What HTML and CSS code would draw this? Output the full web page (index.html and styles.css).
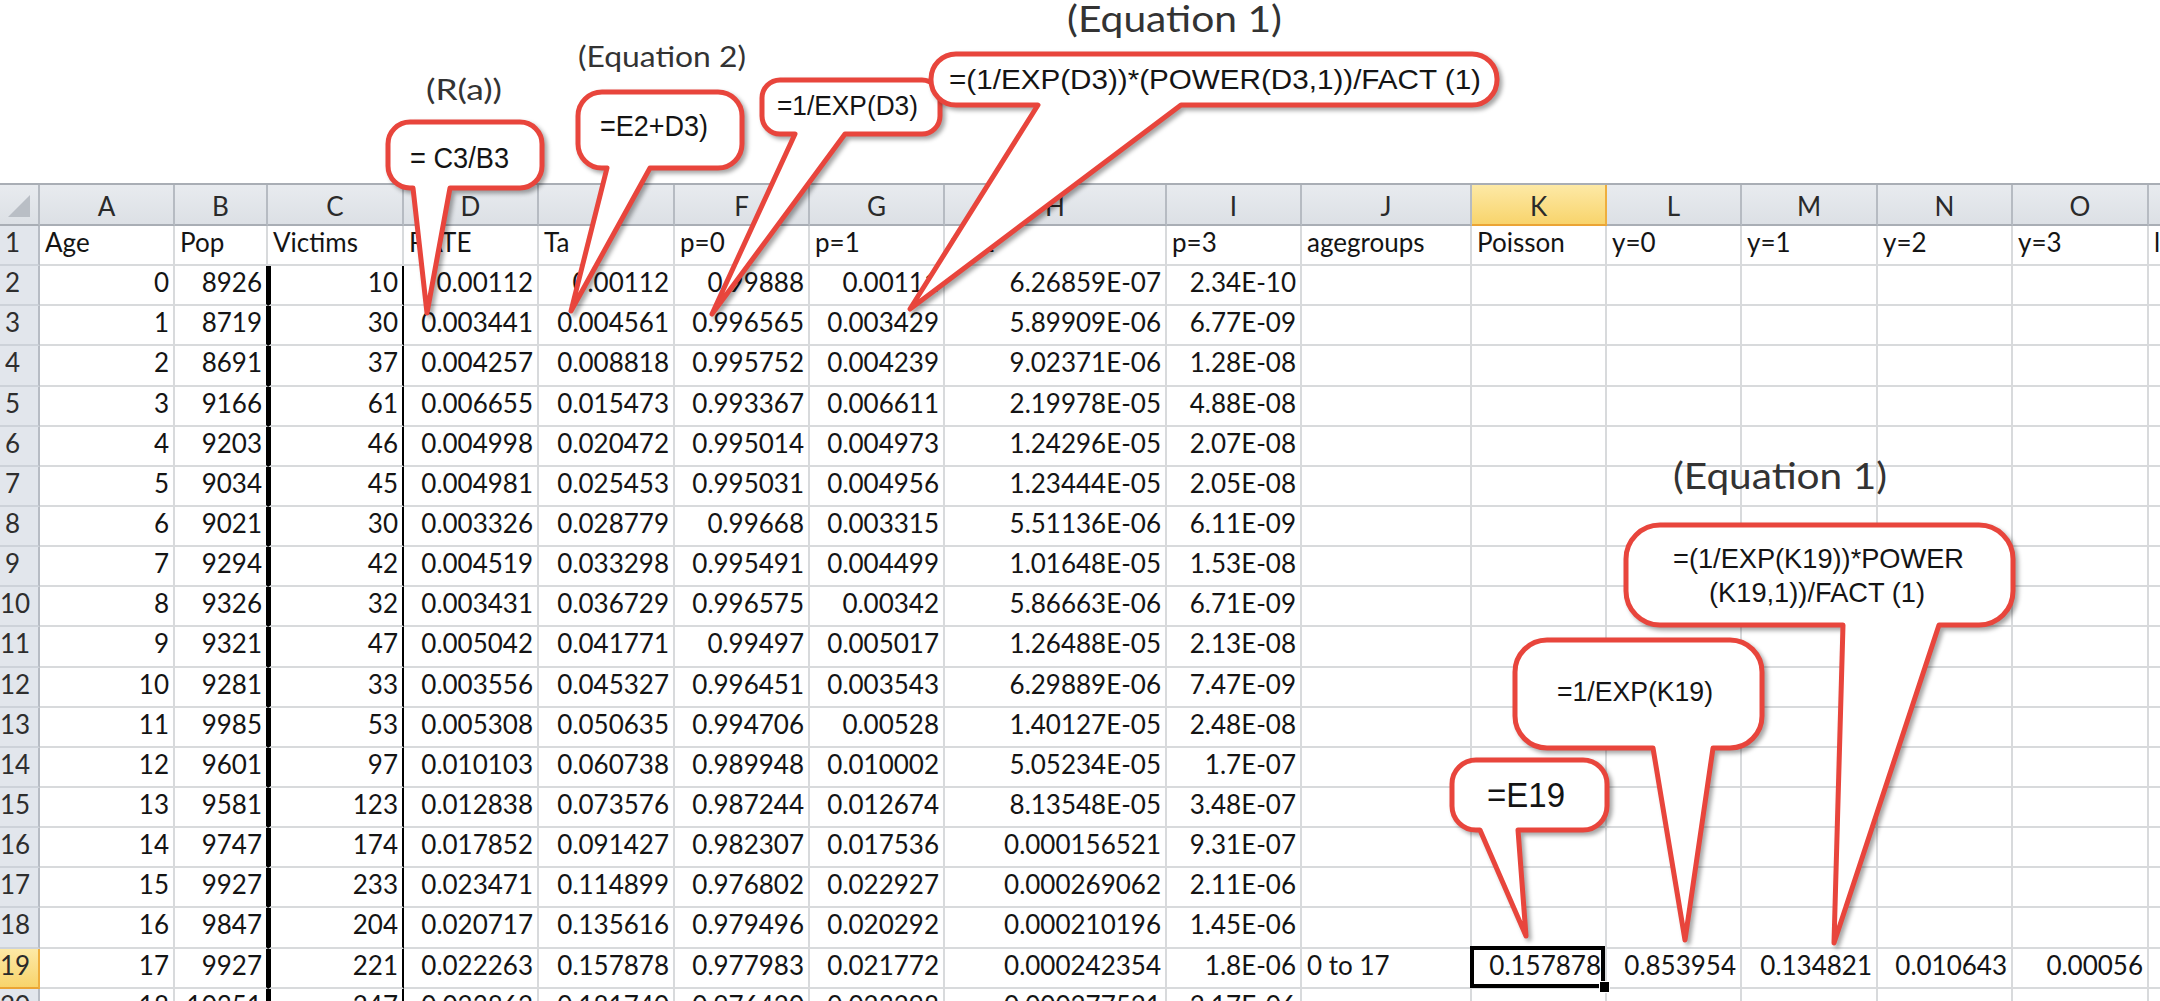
FILE: index.html
```html
<!DOCTYPE html>
<html>
<head>
<meta charset="utf-8">
<link rel="stylesheet" href="styles.css">
</head>
<body>
<div class="page">
  <div class="top"></div>
  <div class="sheet">
    <div class="row head"><div class="corner"></div><div>A</div><div>B</div><div>C</div><div>D</div><div>E</div><div>F</div><div>G</div><div>H</div><div>I</div><div>J</div><div class="hsel">K</div><div>L</div><div>M</div><div>N</div><div>O</div><div>P</div></div>
    <div class="row"><div class="rh">1</div><div class="l">Age</div><div class="l">Pop</div><div class="l">Victims</div><div class="l">RATE</div><div class="l">Ta</div><div class="l">p=0</div><div class="l">p=1</div><div class="l">p=2</div><div class="l">p=3</div><div class="l">agegroups</div><div class="l">Poisson</div><div class="l">y=0</div><div class="l">y=1</div><div class="l">y=2</div><div class="l">y=3</div><div class="l">lambda</div></div>
    <div class="row d"><div class="rh">2</div><div>0</div><div>8926</div><div>10</div><div>0.00112</div><div>0.00112</div><div>0.99888</div><div>0.00111</div><div>6.26859E-07</div><div>2.34E-10</div><div></div><div></div><div></div><div></div><div></div><div></div><div></div></div>
    <div class="row d"><div class="rh">3</div><div>1</div><div>8719</div><div>30</div><div>0.003441</div><div>0.004561</div><div>0.996565</div><div>0.003429</div><div>5.89909E-06</div><div>6.77E-09</div><div></div><div></div><div></div><div></div><div></div><div></div><div></div></div>
    <div class="row d"><div class="rh">4</div><div>2</div><div>8691</div><div>37</div><div>0.004257</div><div>0.008818</div><div>0.995752</div><div>0.004239</div><div>9.02371E-06</div><div>1.28E-08</div><div></div><div></div><div></div><div></div><div></div><div></div><div></div></div>
    <div class="row d"><div class="rh">5</div><div>3</div><div>9166</div><div>61</div><div>0.006655</div><div>0.015473</div><div>0.993367</div><div>0.006611</div><div>2.19978E-05</div><div>4.88E-08</div><div></div><div></div><div></div><div></div><div></div><div></div><div></div></div>
    <div class="row d"><div class="rh">6</div><div>4</div><div>9203</div><div>46</div><div>0.004998</div><div>0.020472</div><div>0.995014</div><div>0.004973</div><div>1.24296E-05</div><div>2.07E-08</div><div></div><div></div><div></div><div></div><div></div><div></div><div></div></div>
    <div class="row d"><div class="rh">7</div><div>5</div><div>9034</div><div>45</div><div>0.004981</div><div>0.025453</div><div>0.995031</div><div>0.004956</div><div>1.23444E-05</div><div>2.05E-08</div><div></div><div></div><div></div><div></div><div></div><div></div><div></div></div>
    <div class="row d"><div class="rh">8</div><div>6</div><div>9021</div><div>30</div><div>0.003326</div><div>0.028779</div><div>0.99668</div><div>0.003315</div><div>5.51136E-06</div><div>6.11E-09</div><div></div><div></div><div></div><div></div><div></div><div></div><div></div></div>
    <div class="row d"><div class="rh">9</div><div>7</div><div>9294</div><div>42</div><div>0.004519</div><div>0.033298</div><div>0.995491</div><div>0.004499</div><div>1.01648E-05</div><div>1.53E-08</div><div></div><div></div><div></div><div></div><div></div><div></div><div></div></div>
    <div class="row d"><div class="rh">10</div><div>8</div><div>9326</div><div>32</div><div>0.003431</div><div>0.036729</div><div>0.996575</div><div>0.00342</div><div>5.86663E-06</div><div>6.71E-09</div><div></div><div></div><div></div><div></div><div></div><div></div><div></div></div>
    <div class="row d"><div class="rh">11</div><div>9</div><div>9321</div><div>47</div><div>0.005042</div><div>0.041771</div><div>0.99497</div><div>0.005017</div><div>1.26488E-05</div><div>2.13E-08</div><div></div><div></div><div></div><div></div><div></div><div></div><div></div></div>
    <div class="row d"><div class="rh">12</div><div>10</div><div>9281</div><div>33</div><div>0.003556</div><div>0.045327</div><div>0.996451</div><div>0.003543</div><div>6.29889E-06</div><div>7.47E-09</div><div></div><div></div><div></div><div></div><div></div><div></div><div></div></div>
    <div class="row d"><div class="rh">13</div><div>11</div><div>9985</div><div>53</div><div>0.005308</div><div>0.050635</div><div>0.994706</div><div>0.00528</div><div>1.40127E-05</div><div>2.48E-08</div><div></div><div></div><div></div><div></div><div></div><div></div><div></div></div>
    <div class="row d"><div class="rh">14</div><div>12</div><div>9601</div><div>97</div><div>0.010103</div><div>0.060738</div><div>0.989948</div><div>0.010002</div><div>5.05234E-05</div><div>1.7E-07</div><div></div><div></div><div></div><div></div><div></div><div></div><div></div></div>
    <div class="row d"><div class="rh">15</div><div>13</div><div>9581</div><div>123</div><div>0.012838</div><div>0.073576</div><div>0.987244</div><div>0.012674</div><div>8.13548E-05</div><div>3.48E-07</div><div></div><div></div><div></div><div></div><div></div><div></div><div></div></div>
    <div class="row d"><div class="rh">16</div><div>14</div><div>9747</div><div>174</div><div>0.017852</div><div>0.091427</div><div>0.982307</div><div>0.017536</div><div>0.000156521</div><div>9.31E-07</div><div></div><div></div><div></div><div></div><div></div><div></div><div></div></div>
    <div class="row d"><div class="rh">17</div><div>15</div><div>9927</div><div>233</div><div>0.023471</div><div>0.114899</div><div>0.976802</div><div>0.022927</div><div>0.000269062</div><div>2.11E-06</div><div></div><div></div><div></div><div></div><div></div><div></div><div></div></div>
    <div class="row d"><div class="rh">18</div><div>16</div><div>9847</div><div>204</div><div>0.020717</div><div>0.135616</div><div>0.979496</div><div>0.020292</div><div>0.000210196</div><div>1.45E-06</div><div></div><div></div><div></div><div></div><div></div><div></div><div></div></div>
    <div class="row d"><div class="rh hsel">19</div><div>17</div><div>9927</div><div>221</div><div>0.022263</div><div>0.157878</div><div>0.977983</div><div>0.021772</div><div>0.000242354</div><div>1.8E-06</div><div class="l">0 to 17</div><div class="cur">0.157878</div><div>0.853954</div><div>0.134821</div><div>0.010643</div><div>0.00056</div><div></div></div>
    <div class="row d"><div class="rh">20</div><div>18</div><div>10351</div><div>247</div><div>0.023862</div><div>0.181740</div><div>0.976420</div><div>0.023298</div><div>0.000277521</div><div>2.17E-06</div><div></div><div></div><div></div><div></div><div></div><div></div><div></div></div>
  </div>

  <svg class="overlay" width="2160" height="1001" viewBox="0 0 2160 1001">
    <text class="lbl s36" x="1067" y="32" textLength="215" lengthAdjust="spacingAndGlyphs">(Equation 1)</text>
    <text class="lbl s29" x="578" y="67" textLength="168" lengthAdjust="spacingAndGlyphs">(Equation 2)</text>
    <text class="lbl s29" x="426" y="100" textLength="76" lengthAdjust="spacingAndGlyphs">(R(a))</text>

    <path class="co" d="M 410 122 H 520 A 22 22 0 0 1 542 144 V 166 A 22 22 0 0 1 520 188 H 450 L 427 313 L 413 188 H 410 A 22 22 0 0 1 388 166 V 144 A 22 22 0 0 1 410 122 Z"/>
    <text class="ct s30" x="410" y="168" textLength="99" lengthAdjust="spacingAndGlyphs">= C3/B3</text>

    <path class="co" d="M 602 92 H 718 A 24 24 0 0 1 742 116 V 144 A 24 24 0 0 1 718 168 H 650 L 571 311 L 607 168 H 602 A 24 24 0 0 1 578 144 V 116 A 24 24 0 0 1 602 92 Z"/>
    <text class="ct s30" x="600" y="136" textLength="108" lengthAdjust="spacingAndGlyphs">=E2+D3)</text>

    <path class="co" d="M 780 80 H 922 A 18 18 0 0 1 940 98 V 116 A 18 18 0 0 1 922 134 H 845 L 712 314 L 795 134 H 780 A 18 18 0 0 1 762 116 V 98 A 18 18 0 0 1 780 80 Z"/>
    <text class="ct s28" x="777" y="115" textLength="141" lengthAdjust="spacingAndGlyphs">=1/EXP(D3)</text>

    <path class="co" d="M 956 54 H 1472 A 25 25 0 0 1 1497 79 V 80 A 25 25 0 0 1 1472 105 H 1181 L 910 309 L 1038 105 H 956 A 25 25 0 0 1 931 80 V 79 A 25 25 0 0 1 956 54 Z"/>
    <text class="ct s28" x="949" y="89" textLength="532" lengthAdjust="spacingAndGlyphs">=(1/EXP(D3))*(POWER(D3,1))/FACT (1)</text>

    <text class="lbl s36" x="1673" y="489" textLength="214" lengthAdjust="spacingAndGlyphs">(Equation 1)</text>

    <path class="co" d="M 1660 525 H 1979 A 34 34 0 0 1 2013 559 V 591 A 34 34 0 0 1 1979 625 H 1939 L 1834 943 L 1843 625 H 1660 A 34 34 0 0 1 1626 591 V 559 A 34 34 0 0 1 1660 525 Z"/>
    <text class="ct s28" x="1673" y="568" textLength="291" lengthAdjust="spacingAndGlyphs">=(1/EXP(K19))*POWER</text>
    <text class="ct s28" x="1709" y="602" textLength="216" lengthAdjust="spacingAndGlyphs">(K19,1))/FACT (1)</text>

    <path class="co" d="M 1547 640 H 1730 A 32 32 0 0 1 1762 672 V 716 A 32 32 0 0 1 1730 748 H 1713 L 1685 940 L 1653 748 H 1547 A 32 32 0 0 1 1515 716 V 672 A 32 32 0 0 1 1547 640 Z"/>
    <text class="ct s28" x="1557" y="701" textLength="156" lengthAdjust="spacingAndGlyphs">=1/EXP(K19)</text>

    <path class="co" d="M 1476 760 H 1583 A 24 24 0 0 1 1607 784 V 806 A 24 24 0 0 1 1583 830 H 1518 L 1526 936 L 1480 830 H 1476 A 24 24 0 0 1 1452 806 V 784 A 24 24 0 0 1 1476 760 Z"/>
    <text class="ct s35" x="1487" y="807" textLength="78" lengthAdjust="spacingAndGlyphs">=E19</text>
  </svg>
</div>
</body>
</html>
```

FILE: styles.css
```css
html, body {
  margin: 0;
  padding: 0;
  background: #ffffff;
}

.page {
  position: relative;
  width: 2160px;
  height: 1001px;
  overflow: hidden;
  background: #ffffff;
  font-family: Lato, "Liberation Sans", sans-serif;
}

.top {
  height: 183px;
}

.row {
  display: grid;
  grid-template-columns: 40px 135px 93px 136px 135px 136px 135px 135px 222px 135px 170px 135px 135px 136px 135px 136px 40px;
  height: 40.15px;
  box-sizing: border-box;
}

.row > div {
  box-sizing: border-box;
  border-right: 2px solid #d8dadc;
  border-bottom: 2px solid #d8dadc;
  padding: 0 4px 0 5px;
  font-size: 26px;
  line-height: 32px;
  text-align: right;
  white-space: nowrap;
  overflow: hidden;
  color: #141414;
}

.row > .l {
  text-align: left;
}

.row > .rh {
  background: #e2e6ec;
  border-right-color: #b7bcc4;
  border-bottom-color: #cdd2d9;
  text-align: center;
  padding: 0 13px 0 0;
  color: #2e2e2e;
}

.head {
  height: 43px;
  border-top: 2px solid #a9aeb5;
}

.head > div {
  background: linear-gradient(#e8ebef, #dce0e5);
  text-align: center;
  padding: 3px 0 0 0;
  line-height: 37px;
  border-right-color: #b6bbc2;
  border-bottom-color: #a9aeb5;
  color: #2a2a2a;
}

.head > .corner {
  position: relative;
  background: linear-gradient(#e8ebef, #dce0e5);
}

.corner::after {
  content: "";
  position: absolute;
  right: 8px;
  bottom: 7px;
  width: 0;
  height: 0;
  border-left: 22px solid transparent;
  border-bottom: 22px solid #b9bec5;
}

.row > .hsel,
.head > .hsel {
  background: linear-gradient(#fde9a6, #f8d46c);
  border-right-color: #eeae3e;
  border-bottom-color: #eba434;
  color: #2a2a2a;
}

.d > div:nth-child(3) {
  border-right: 2px solid #000000;
}

.d > div:nth-child(4) {
  border-left: 3px solid #000000;
  border-right-color: #000000;
}

.row > .cur {
  position: relative;
  overflow: visible;
}

.cur::after {
  content: "";
  position: absolute;
  left: -2px;
  top: -3px;
  right: 0;
  bottom: -1px;
  border: 4px solid #000000;
}

.cur::before {
  content: "";
  position: absolute;
  right: -5px;
  bottom: -6px;
  width: 9px;
  height: 10px;
  background: #000000;
  border: 1px solid #ffffff;
  z-index: 2;
}

.overlay {
  position: absolute;
  left: 0;
  top: 0;
  pointer-events: none;
}

.co {
  fill: #ffffff;
  stroke: #e8453c;
  stroke-width: 5;
  stroke-linejoin: round;
  filter: drop-shadow(3px 3px 2px rgba(0, 0, 0, 0.35));
}

.ct {
  font-family: "Liberation Sans Narrow", "Liberation Sans", Arial, sans-serif;
  font-size: 28px;
  fill: #141414;
}

.ct.s28 {
  font-size: 28px;
}

.ct.s30 {
  font-size: 30px;
}

.ct.s35 {
  font-size: 35px;
}

.lbl {
  font-family: Lato, "Liberation Sans", sans-serif;
  font-weight: 400;
  fill: #333333;
}

.lbl.s29 {
  font-size: 29px;
}

.lbl.s36 {
  font-size: 36px;
}
```
